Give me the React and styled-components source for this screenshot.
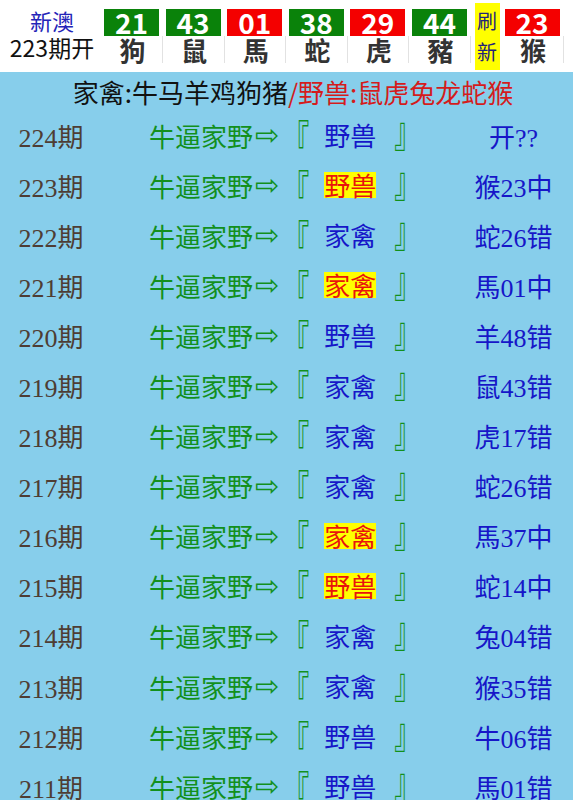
import React from 'react'
import styled, { createGlobalStyle } from 'styled-components'

const Global = createGlobalStyle`
    body {
        margin: 0;
        background: #fff;
        font-family: "Noto Sans CJK SC", "Noto Sans", sans-serif;
    }
`

const Page = styled.div`
    width: 573px;
`

const Header = styled.header`
    display: flex;
    align-items: flex-start;
    height: 72px;
    background: #fff;
`

const Issue = styled.div`
    width: 104px;
    display: flex;
    flex-direction: column;
    align-items: center;
    padding-top: 7px;
    font-size: 23px;
    line-height: 27px;
    color: #111;
`

const IssueTitle = styled.span`
    color: #2424b8;
    font-size: 22px;
`

const Ball = styled.div`
    width: 61.6px;
    display: flex;
    flex-direction: column;
`

const Num = styled.div`
    width: 55px;
    height: 27px;
    margin-top: 9px;
    background: ${p => p.red ? '#f40000' : '#0a820a'};
    color: #fff;
    font-size: 28px;
    font-weight: bold;
    line-height: 27px;
    text-align: center;
`

const Zodiac = styled.div`
    width: 57px;
    height: 27px;
    border-right: 1px solid #e2e2e2;
    color: #333;
    font-size: 26px;
    font-weight: bold;
    line-height: 27px;
    text-align: center;
    padding-right: 1px;
`

const Refresh = styled.div`
    width: 25px;
    height: 67px;
    margin: 3px 5px 0 1px;
    background: #ffff00;
    color: #23237a;
    font-size: 20px;
    line-height: 31px;
    text-align: center;
    padding-top: 2px;
    box-sizing: border-box;
`

const Board = styled.section`
    background: #87ceeb;
`

const Title = styled.div`
    height: 38px;
    display: flex;
    align-items: center;
    justify-content: center;
    font-size: 26px;
    color: #111;
    padding-left: 13px;
`

const Wild = styled.span`
    color: #d41c1c;
`

const Row = styled.div`
    display: grid;
    grid-template-columns: 102px 352px 1fr;
    align-items: center;
    height: 50.1px;
    font-size: 26px;
    font-family: "Liberation Serif", "Noto Sans CJK SC", serif;
`

const Period = styled.div`
    text-align: center;
    color: #4e3d34;
`

const Pick = styled.div`
    display: flex;
    align-items: center;
    padding-left: 47px;
    color: #12901c;
    white-space: nowrap;
`

const Farm = styled.span`
    font-family: "Noto Sans CJK SC", sans-serif;
`

const Arrow = styled.span`
    font-family: "DejaVu Sans", sans-serif;
    font-size: 29px;
    margin: 0 0 0 2px;
`

const Bracket = styled.span`
    display: inline-block;
    width: 26px;
    margin-left: ${p => p.close ? '0' : '4px'};
    text-align: ${p => p.close ? 'left' : 'right'};
    font-family: "Noto Sans CJK SC", sans-serif;
    transform: ${p => p.close ? 'translateY(-7px)' : 'translateY(2px)'} scaleY(1.6);
`

const Group = styled.span`
    display: inline-block;
    height: 26px;
    line-height: 26px;
    margin: 0 18px 0 15px;
    color: ${p => p.hit ? '#e8140c' : '#1616c8'};
    background: ${p => p.hit ? '#ffff00' : 'transparent'};
    font-family: "Noto Sans CJK SC", sans-serif;
`

const Result = styled.div`
    text-align: center;
    color: #1616c8;
`

const rows = [
    ['224', '野兽', false, '开??'],
    ['223', '野兽', true, '猴23中'],
    ['222', '家禽', false, '蛇26错'],
    ['221', '家禽', true, '馬01中'],
    ['220', '野兽', false, '羊48错'],
    ['219', '家禽', false, '鼠43错'],
    ['218', '家禽', false, '虎17错'],
    ['217', '家禽', false, '蛇26错'],
    ['216', '家禽', true, '馬37中'],
    ['215', '野兽', true, '蛇14中'],
    ['214', '家禽', false, '兔04错'],
    ['213', '家禽', false, '猴35错'],
    ['212', '野兽', false, '牛06错'],
    ['211', '野兽', false, '馬01错'],
    ['210', '家禽', false, '狗21中'],
]

const balls = [
    ['21', '狗', false],
    ['43', '鼠', false],
    ['01', '馬', true],
    ['38', '蛇', false],
    ['29', '虎', true],
    ['44', '豬', false],
]

const App = () => {
    return (
        <Page>
            <Global />
            <Header>
                <Issue>
                    <IssueTitle>新澳</IssueTitle>
                    <span>223期开</span>
                </Issue>
                {balls.map(([n, z, red]) => (
                    <Ball key={n}>
                        <Num red={red}>{n}</Num>
                        <Zodiac>{z}</Zodiac>
                    </Ball>
                ))}
                <Refresh>刷<br />新</Refresh>
                <Ball>
                    <Num red>23</Num>
                    <Zodiac>猴</Zodiac>
                </Ball>
            </Header>
            <Board>
                <Title>家禽:牛马羊鸡狗猪<Wild>/野兽:鼠虎兔龙蛇猴</Wild></Title>
                {rows.map(([p, g, hit, r]) => (
                    <Row key={p}>
                        <Period>{p}期</Period>
                        <Pick>
                            <Farm>牛逼家野</Farm>
                            <Arrow>⇨</Arrow>
                            <Bracket>『</Bracket>
                            <Group hit={hit}>{g}</Group>
                            <Bracket close>』</Bracket>
                        </Pick>
                        <Result>{r}</Result>
                    </Row>
                ))}
            </Board>
        </Page>
    )
}

export default App
